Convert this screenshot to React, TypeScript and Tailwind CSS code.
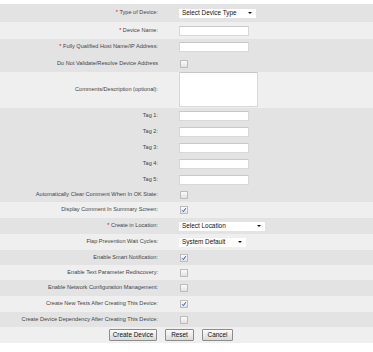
import React from "react";

const DARK = "bg-[#e3e3e3]";
const LIGHT = "bg-[#efefef]";

function Row({
  label,
  required,
  bg,
  h,
  top,
  children,
}: {
  label: string;
  required?: boolean;
  bg: string;
  h: string;
  top?: boolean;
  children?: React.ReactNode;
}) {
  return (
    <div className={`flex ${top ? "items-start" : "items-center"} ${bg} ${h}`}>
      <div
        className={`w-[158px] shrink-0 text-right text-[5.6px] leading-none text-[#444] whitespace-nowrap ${
          top ? "self-center" : ""
        }`}
      >
        {required && <span className="text-[#e00000]">* </span>}
        {label}
      </div>
      <div className="ml-[21px] flex items-center">{children}</div>
    </div>
  );
}

function TextBox() {
  return (
    <div className="w-[70px] h-[10px] bg-white border border-[#d8d8d8] border-t-[#c8c8c8]" />
  );
}

function SelectBox({ text, w }: { text: string; w: string }) {
  return (
    <div
      className={`${w} h-[9px] bg-white flex items-center justify-between pl-[3px] pr-[4px] text-[6.4px] leading-none text-[#111]`}
    >
      <span>{text}</span>
      <span className="w-0 h-0 border-l-[2px] border-r-[2px] border-t-[2.5px] border-l-transparent border-r-transparent border-t-[#111]" />
    </div>
  );
}

function Check({ checked }: { checked?: boolean }) {
  return (
    <div className="ml-[1px] w-[8px] h-[8px] border border-[#bcbcbc] bg-gradient-to-b from-[#fbfbfb] to-[#e2e2e2] flex items-center justify-center">
      {checked && (
        <svg width="6" height="6" viewBox="0 0 6 6">
          <path d="M1.2 3.3 L2.4 4.6 L4.8 1.2" fill="none" stroke="#2f4fa8" strokeWidth="1" />
        </svg>
      )}
    </div>
  );
}

function Btn({ text, w }: { text: string; w: string }) {
  return (
    <div
      className={`${w} h-[12px] border border-[#8c8c8c] rounded-[1px] bg-gradient-to-b from-[#fbfbfb] to-[#d9d9d9] flex items-center justify-center text-[6.4px] leading-none text-[#111]`}
    >
      {text}
    </div>
  );
}

export default function App() {
  return (
    <div
      className="w-[373px] h-[352px] bg-white pt-[4px]"
      style={{ fontFamily: '"Liberation Sans", Arial, sans-serif' }}
    >
      <Row label="Type of Device:" required bg={DARK} h="h-[18px]">
        <SelectBox text="Select Device Type" w="w-[77px]" />
      </Row>
      <Row label="Device Name:" required bg={LIGHT} h="h-[17px]">
        <TextBox />
      </Row>
      <Row label="Fully Qualified Host Name/IP Address:" required bg={DARK} h="h-[16px]">
        <TextBox />
      </Row>
      <Row label="Do Not Validate/Resolve Device Address" bg={DARK} h="h-[17px]">
        <Check />
      </Row>
      <Row label="Comments/Description (optional):" bg={LIGHT} h="h-[36px]" top>
        <div className="w-[79px] h-[35px] bg-white border border-[#d8d8d8] border-t-[#c8c8c8]" />
      </Row>
      <Row label="Tag 1:" bg={DARK} h="h-[16px]">
        <TextBox />
      </Row>
      <Row label="Tag 2:" bg={DARK} h="h-[16px]">
        <TextBox />
      </Row>
      <Row label="Tag 3:" bg={DARK} h="h-[16px]">
        <TextBox />
      </Row>
      <Row label="Tag 4:" bg={DARK} h="h-[16px]">
        <TextBox />
      </Row>
      <Row label="Tag 5:" bg={DARK} h="h-[16px]">
        <TextBox />
      </Row>
      <Row label="Automatically Clear Comment When In OK State:" bg={DARK} h="h-[14px]">
        <Check />
      </Row>
      <Row label="Display Comment In Summary Screen:" bg={LIGHT} h="h-[16px]">
        <Check checked />
      </Row>
      <Row label="Create in Location:" required bg={DARK} h="h-[16px]">
        <SelectBox text="Select Location" w="w-[86px]" />
      </Row>
      <Row label="Flap Prevention Wait Cycles:" bg={LIGHT} h="h-[16px]">
        <SelectBox text="System Default" w="w-[67px]" />
      </Row>
      <Row label="Enable Smart Notification:" bg={DARK} h="h-[15px]">
        <Check checked />
      </Row>
      <Row label="Enable Text Parameter Rediscovery:" bg={LIGHT} h="h-[15px]">
        <Check />
      </Row>
      <Row label="Enable Network Configuration Management:" bg={DARK} h="h-[16px]">
        <Check />
      </Row>
      <Row label="Create New Tests After Creating This Device:" bg={LIGHT} h="h-[16px]">
        <Check checked />
      </Row>
      <Row label="Create Device Dependency After Creating This Device:" bg={DARK} h="h-[15px]">
        <Check />
      </Row>
      <div className={`${LIGHT} h-[16px] flex items-center pl-[109px] gap-[8px]`}>
        <Btn text="Create Device" w="w-[48px]" />
        <Btn text="Reset" w="w-[29px]" />
        <Btn text="Cancel" w="w-[31px]" />
      </div>
    </div>
  );
}
